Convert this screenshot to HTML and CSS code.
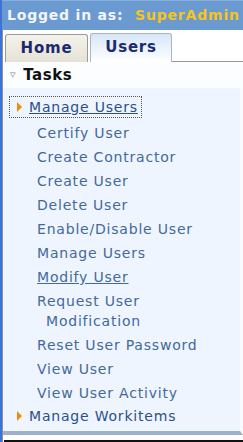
FILE: index.html
```html
<!DOCTYPE html>
<html lang="en">
<head>
    <meta charset="UTF-8">
    <title>Tasks</title>
    <link rel="stylesheet" href="styles.css">
</head>
<body>
    <div class="frame">
        <div class="login-bar">Logged in as: <span class="user">SuperAdmin</span></div>
        <div class="tabs">
            <div class="tab">Home</div>
            <div class="tab active">Users</div>
            <div class="tab-rest"></div>
        </div>
        <div class="tasks-head"><span class="caret">&#9663;</span>Tasks</div>
        <div class="task-panel">
            <ul class="task-list">
                <li class="group">
                    <a href="#" class="group-link focused"><span class="arrow"></span><span class="label">Manage Users</span></a>
                    <ul class="sub-list">
                        <li><a href="#">Certify User</a></li>
                        <li><a href="#">Create Contractor</a></li>
                        <li><a href="#">Create User</a></li>
                        <li><a href="#">Delete User</a></li>
                        <li><a href="#">Enable/Disable User</a></li>
                        <li><a href="#">Manage Users</a></li>
                        <li><a href="#" class="hover">Modify User</a></li>
                        <li><a href="#">Request User Modification</a></li>
                        <li><a href="#">Reset User Password</a></li>
                        <li><a href="#">View User</a></li>
                        <li><a href="#">View User Activity</a></li>
                    </ul>
                </li>
                <li class="group">
                    <a href="#" class="group-link"><span class="arrow"></span><span class="label">Manage Workitems</span></a>
                </li>
            </ul>
        </div>
        <div class="bottom-line"></div>
    </div>
</body>
</html>
```

FILE: styles.css
```css
body {
    margin: 0;
    font-family: "DejaVu Sans", Verdana, sans-serif;
    background: #ffffff;
    width: 243px;
    height: 442px;
    overflow: hidden;
}
.frame {
    height: 442px;
    border-left: 2px solid #3b74d6;
    padding-left: 1px;
    box-sizing: border-box;
    display: flex;
    flex-direction: column;
    background: linear-gradient(to right, #8a8f98 0, #8a8f98 1px, transparent 1px);
}
.login-bar {
    height: 30px;
    margin-left: -1px;
    background: #6b9ad0;
    border-top: 1px solid #86afdc;
    box-sizing: border-box;
    color: #f2f6fb;
    font-weight: bold;
    font-size: 14px;
    letter-spacing: 0.8px;
    line-height: 29px;
    padding-left: 5px;
    white-space: nowrap;
    overflow: hidden;
}
.login-bar .user {
    color: #f5c51c;
    margin-left: 6px;
}
.tabs {
    display: flex;
    align-items: flex-end;
    height: 32px;
    padding-left: 2px;
    padding-top: 3px;
    box-sizing: border-box;
}
.tab {
    width: 83px;
    height: 28px;
    box-sizing: border-box;
    border: 1px solid #9a9a96;
    border-bottom: none;
    border-radius: 3px 3px 0 0;
    background: linear-gradient(#f4f2ec, #e6e2d7);
    color: #1c2a6e;
    font-weight: bold;
    font-size: 15px;
    letter-spacing: 0.8px;
    line-height: 27px;
    text-align: center;
    margin-right: 2px;
}
.tab.active {
    width: 82px;
    background: linear-gradient(#d6e6f8, #ffffff);
    border-color: #a9b4c4;
    height: 29px;
}
.tab-rest {
    flex: 1;
    height: 100%;
    border-bottom: 1px solid #9a9a9a;
    margin-left: -2px;
}
.tasks-head {
    height: 26px;
    background: #fbfdff;
    font-weight: bold;
    font-size: 15px;
    letter-spacing: 0.6px;
    line-height: 26px;
    color: #111111;
    padding-left: 7px;
}
.caret {
    color: #7d8690;
    font-size: 11px;
    font-weight: normal;
    margin-right: 7px;
    vertical-align: 2px;
}
.task-panel {
    flex: 1;
    background: #eef5fe;
    border-right: 3px solid #f8fbff;
    border-bottom: 4px solid #9fb1c8;
    padding-top: 8px;
}
.task-list, .sub-list {
    list-style: none;
    margin: 0;
    padding: 0;
}
.task-list a {
    text-decoration: none;
    color: #44699b;
    font-size: 14px;
    letter-spacing: 0.8px;
}
.group-link {
    display: inline-flex;
    align-items: center;
    height: 20px;
    padding: 0 3px 0 7px;
    margin-left: 6px;
    border: 1px dotted transparent;
}
.group-link.focused {
    border-color: #555555;
}
.group-link.focused .label {
    text-decoration: underline;
}
.task-list .group-link {
    color: #2c4f8a;
}
.arrow {
    width: 0;
    height: 0;
    border-top: 5px solid transparent;
    border-bottom: 5px solid transparent;
    border-left: 5px solid #f58a0a;
    margin-right: 7px;
}
.sub-list {
    padding-top: 3px;
}
.sub-list li {
    padding: 2px 12px 2px 43px;
    text-indent: -9px;
    line-height: 20px;
}
.sub-list a.hover {
    text-decoration: underline;
}
.bottom-line {
    height: 5px;
    border-bottom: 2px solid #111111;
    margin-left: 1px;
}
```
